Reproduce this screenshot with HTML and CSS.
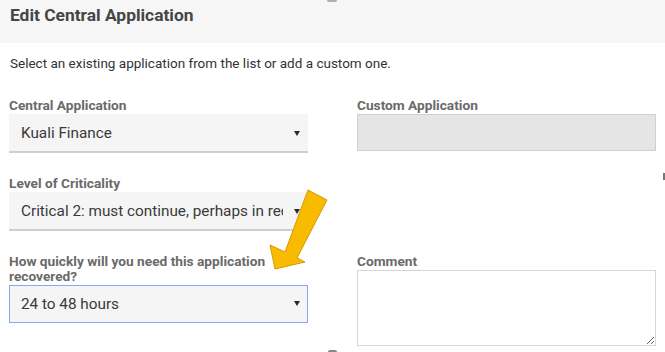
FILE: index.html
```html
<!DOCTYPE html>
<html>
<head>
<meta charset="utf-8">
<link rel="stylesheet" href="styles.css">
</head>
<body>
<div class="modal">
  <div class="header"><h1 class="title">Edit Central Application</h1></div>
  <p class="desc">Select an existing application from the list or add a custom one.</p>
  <div class="grid">
    <div class="field">
      <div class="label">Central Application</div>
      <div class="select"><span class="val">Kuali Finance</span><span class="caret"></span></div>
    </div>
    <div class="field">
      <div class="label">Custom Application</div>
      <div class="input"></div>
    </div>
    <div class="field">
      <div class="label">Level of Criticality</div>
      <div class="select"><span class="val">Critical 2: must continue, perhaps in reduced mode</span><span class="caret"></span></div>
    </div>
    <div class="field"></div>
    <div class="field">
      <div class="label">How quickly will you need this application recovered?</div>
      <div class="select focus"><span class="val">24 to 48 hours</span><span class="caret"></span></div>
    </div>
    <div class="field">
      <div class="label">Comment</div>
      <textarea class="comment"></textarea>
    </div>
  </div>
  <svg class="pointer" width="665" height="352" viewBox="0 0 665 352">
    <polygon points="308,190 327,200 297,258 305,262 275,269 270,245 285,252" fill="#f8bb00" stroke="#d59b00" stroke-width="1" stroke-linejoin="round"/>
  </svg>
  <span class="bit bit-top"></span>
  <span class="bit bit-right"></span>
  <span class="bit bit-bottom"></span>
</div>
</body>
</html>
```
FILE: styles.css
```css
* { box-sizing: border-box; }
html, body { margin: 0; padding: 0; background: #fff; }
body {
  font-family: Roboto, "Liberation Sans", sans-serif;
  width: 665px;
  height: 352px;
  overflow: hidden;
}
.modal { position: relative; width: 665px; height: 352px; }
.header {
  height: 43px;
  background: #f6f6f6;
  padding: 5px 10px 0;
}
.title {
  margin: 0;
  font-size: 17.4px;
  line-height: 20px;
  font-weight: 700;
  color: #454545;
}
.desc {
  margin: 13px 0 0 10px;
  font-size: 13.5px;
  line-height: 15px;
  color: #333;
}
.grid {
  display: grid;
  grid-template-columns: 299px 299px;
  column-gap: 49px;
  row-gap: 23px;
  padding: 27px 0 0 9px;
  align-items: start;
}
.label {
  font-size: 13.7px;
  line-height: 15px;
  font-weight: 700;
  color: #6a6a6a;
  margin-bottom: 1px;
}
.select {
  position: relative;
  height: 39px;
  background: #f5f5f5;
  border-bottom: 2px solid #cfcfcf;
  display: flex;
  align-items: center;
  padding: 0 25px 0 12px;
  font-size: 15.3px;
  color: #3a3a3a;
}
.select .val {
  white-space: nowrap;
  overflow: hidden;
  flex: 1;
}
.select .caret {
  position: absolute;
  right: 8px;
  top: 17px;
  width: 0;
  height: 0;
  border-left: 3.5px solid transparent;
  border-right: 3.5px solid transparent;
  border-top: 5px solid #2a2a2a;
}
.select.focus {
  height: 38px;
  border: 1px solid #82aaf0;
  padding-left: 11px;
}
.select.focus .caret { right: 7px; top: 15px; }
.input {
  height: 37px;
  background: #e5e5e5;
  border: 1px solid #d0d0d0;
}
.comment {
  display: block;
  margin: 0;
  width: 299px;
  height: 76px;
  border: 1px solid #d5d5d5;
  border-radius: 0;
  background: #fff;
  padding: 4px;
  font-family: inherit;
  font-size: 13px;
  outline: none;
}
.pointer { position: absolute; left: 0; top: 0; pointer-events: none; }
.bit { position: absolute; background: #9a9a9a; }
.bit-top { left: 327px; top: 0; width: 10px; height: 2px; border-radius: 0 0 5px 5px; background: #b0b0b0; }
.bit-right { left: 663px; top: 173px; width: 2px; height: 7px; background: #777; }
.bit-bottom { left: 328px; top: 350px; width: 9px; height: 2px; border-radius: 4px 4px 0 0; background: #888; }
```
